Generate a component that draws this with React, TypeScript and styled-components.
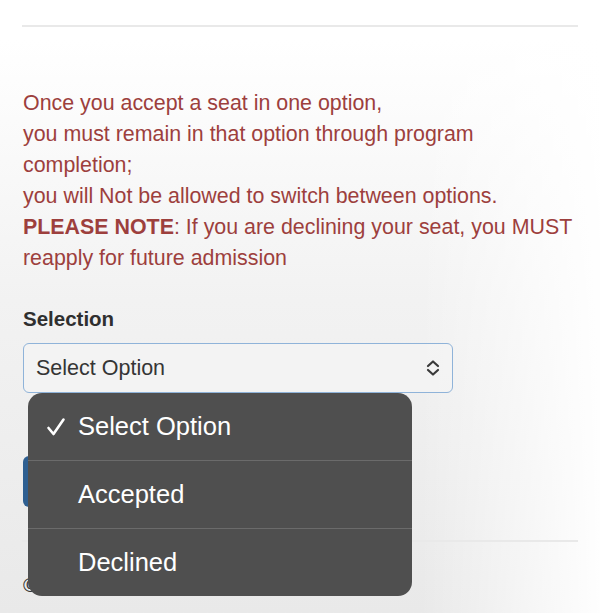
import React from "react";
import styled, { createGlobalStyle } from "styled-components";

const GlobalStyle = createGlobalStyle`
  html, body {
    margin: 0;
    padding: 0;
  }
  body {
    font-family: "Liberation Sans", Arial, sans-serif;
  }
`;

const options = ["Select Option", "Accepted", "Declined"];

const App = () => {
  return (
    <Page>
      <GlobalStyle />
      <Container>
        <Rule />
        <Notice>
          Once you accept a seat in one option,
          <br />
          you must remain in that option through program completion;
          <br />
          you will Not be allowed to switch between options.
          <br />
          <strong>PLEASE NOTE</strong>: If you are declining your seat, you
          MUST reapply for future admission
        </Notice>
        <Field>
          <Label>Selection</Label>
          <SelectWrap>
            <SelectBox>
              <span>Select Option</span>
              <svg width="14" height="18" viewBox="0 0 14 18">
                <polyline
                  points="2,7 7,2.5 12,7"
                  fill="none"
                  stroke="#3a3a3a"
                  strokeWidth="2.2"
                  strokeLinecap="round"
                  strokeLinejoin="round"
                />
                <polyline
                  points="2,11 7,15.5 12,11"
                  fill="none"
                  stroke="#3a3a3a"
                  strokeWidth="2.2"
                  strokeLinecap="round"
                  strokeLinejoin="round"
                />
              </svg>
            </SelectBox>
            <Menu>
              {options.map((o, i) => (
                <MenuItem key={o} first={i === 0}>
                  <Check>
                    {i === 0 && (
                      <svg width="20" height="20" viewBox="0 0 20 20">
                        <polyline
                          points="2.5,11 7.5,17 17.5,2.5"
                          fill="none"
                          stroke="#fff"
                          strokeWidth="2.6"
                          strokeLinecap="round"
                          strokeLinejoin="round"
                        />
                      </svg>
                    )}
                  </Check>
                  {o}
                </MenuItem>
              ))}
            </Menu>
          </SelectWrap>
        </Field>
        <SubmitButton>Submit</SubmitButton>
        <Rule />
        <Footer>©</Footer>
      </Container>
    </Page>
  );
};

export default App;

const Page = styled.div`
  min-height: 613px;
  background: linear-gradient(
      to left,
      rgba(255, 255, 255, 0.95) 0%,
      rgba(255, 255, 255, 0) 30%
    ),
    linear-gradient(to bottom, #ffffff 40px, #f2f2f2 300px, #e9e9e9 100%);
  overflow: hidden;
`;

const Container = styled.div`
  padding: 25px 22px 0 23px;
`;

const Rule = styled.div`
  height: 2px;
  background: #e9e9e9;
  margin-left: -1px;
`;

const Notice = styled.p`
  margin: 61px 0 0;
  font-size: 21.4px;
  line-height: 31px;
  color: #9d3f3d;

  strong {
    font-weight: 700;
  }
`;

const Field = styled.div`
  margin-top: 33px;
`;

const Label = styled.div`
  font-size: 20.5px;
  font-weight: 700;
  line-height: 24px;
  color: #2f2f2f;
  margin-bottom: 12px;
`;

const SelectWrap = styled.div`
  position: relative;
  width: 430px;
`;

const SelectBox = styled.div`
  box-sizing: border-box;
  height: 50px;
  border: 1.5px solid #8fb3d9;
  border-radius: 6px;
  background: rgba(245, 245, 245, 0.6);
  display: flex;
  align-items: center;
  justify-content: space-between;
  padding: 0 12px 0 12px;
  font-size: 21.5px;
  color: #353535;
`;

const Menu = styled.div`
  position: absolute;
  top: 50px;
  left: 5px;
  width: 384px;
  background: #4f4f4f;
  border-radius: 14px;
  overflow: hidden;
  z-index: 2;
`;

const MenuItem = styled.div<{ first: boolean }>`
  height: 67px;
  display: flex;
  align-items: center;
  padding-left: 18px;
  font-size: 25.5px;
  color: #ffffff;
  border-top: ${(p) => (p.first ? "none" : "1px solid #6b6b6b")};
`;

const Check = styled.span`
  width: 32px;
  display: inline-flex;
  align-items: center;
`;

const SubmitButton = styled.button`
  margin: 63px 0 33px;
  height: 51px;
  width: 120px;
  border: none;
  border-radius: 6px;
  background: #2e5f91;
  color: #fff;
  font-size: 20px;
  font-family: "Liberation Sans", Arial, sans-serif;
  display: block;
`;

const Footer = styled.div`
  margin-top: 31px;
  font-size: 20px;
  line-height: 24px;
  color: #333;
`;
